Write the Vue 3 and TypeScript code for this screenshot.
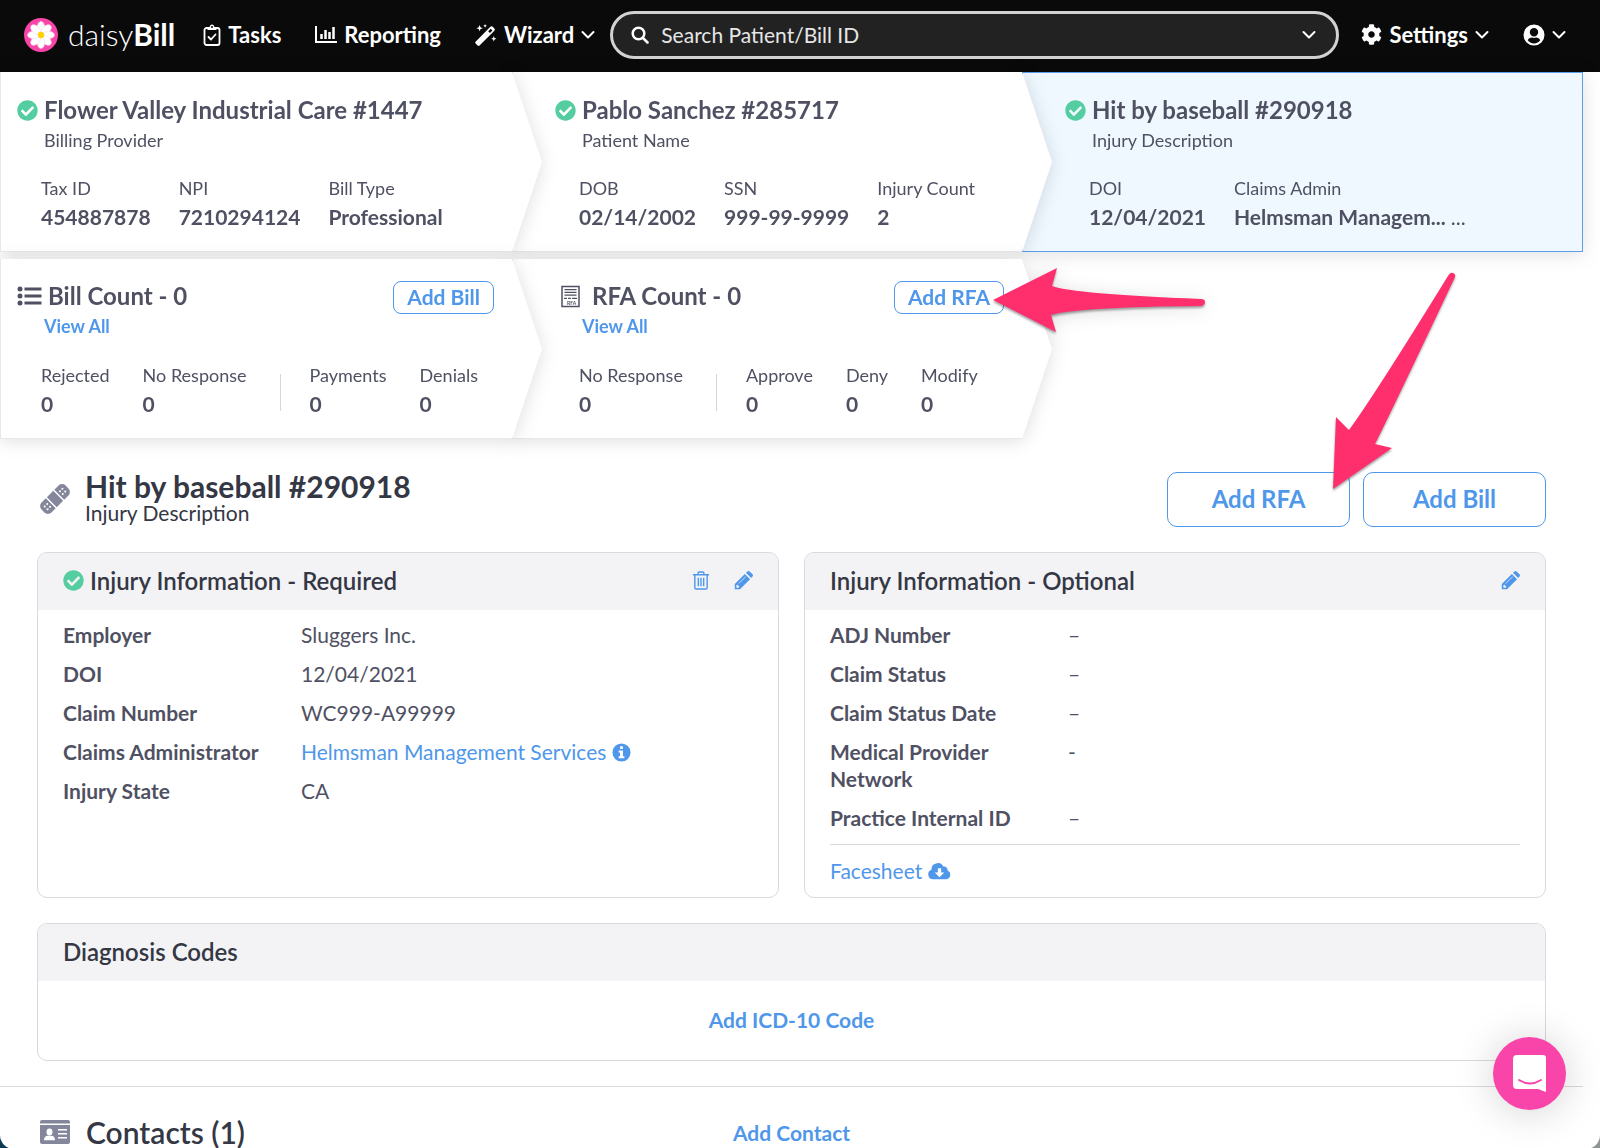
<script setup lang="ts">
import { ref } from 'vue'

interface Stat {
  label: string
  value: string
  more?: boolean
  divided?: boolean
}
interface Crumb {
  title: string
  caption: string
  active?: boolean
  stats: Stat[]
}
interface Counter {
  title: string
  icon: 'list' | 'rfa'
  action: string
  pointed?: boolean
  stats: Stat[]
}
interface Field {
  label: string
  value: string
  link?: boolean
}

const query = ref('')

const crumbs: Crumb[] = [
  {
    title: 'Flower Valley Industrial Care #1447',
    caption: 'Billing Provider',
    stats: [
      { label: 'Tax ID', value: '454887878' },
      { label: 'NPI', value: '7210294124' },
      { label: 'Bill Type', value: 'Professional' },
    ],
  },
  {
    title: 'Pablo Sanchez #285717',
    caption: 'Patient Name',
    stats: [
      { label: 'DOB', value: '02/14/2002' },
      { label: 'SSN', value: '999-99-9999' },
      { label: 'Injury Count', value: '2' },
    ],
  },
  {
    title: 'Hit by baseball #290918',
    caption: 'Injury Description',
    active: true,
    stats: [
      { label: 'DOI', value: '12/04/2021' },
      { label: 'Claims Admin', value: 'Helmsman Managem...', more: true },
    ],
  },
]

const counters: Counter[] = [
  {
    title: 'Bill Count - 0',
    icon: 'list',
    action: 'Add Bill',
    stats: [
      { label: 'Rejected', value: '0' },
      { label: 'No Response', value: '0' },
      { label: 'Payments', value: '0', divided: true },
      { label: 'Denials', value: '0' },
    ],
  },
  {
    title: 'RFA Count - 0',
    icon: 'rfa',
    action: 'Add RFA',
    pointed: true,
    stats: [
      { label: 'No Response', value: '0' },
      { label: 'Approve', value: '0', divided: true },
      { label: 'Deny', value: '0' },
      { label: 'Modify', value: '0' },
    ],
  },
]

const required: Field[] = [
  { label: 'Employer', value: 'Sluggers Inc.' },
  { label: 'DOI', value: '12/04/2021' },
  { label: 'Claim Number', value: 'WC999-A99999' },
  { label: 'Claims Administrator', value: 'Helmsman Management Services', link: true },
  { label: 'Injury State', value: 'CA' },
]

const optional: Field[] = [
  { label: 'ADJ Number', value: '–' },
  { label: 'Claim Status', value: '–' },
  { label: 'Claim Status Date', value: '–' },
  { label: 'Medical Provider Network', value: '-' },
  { label: 'Practice Internal ID', value: '–' },
]

const petals = [0, 45, 90, 135, 180, 225, 270, 315]
</script>

<template>
  <div class="window">
    <svg class="sprite" aria-hidden="true">
      <symbol id="check" viewBox="0 0 512 512">
        <path d="M504 256c0 136.967-111.033 248-248 248S8 392.967 8 256 119.033 8 256 8s248 111.033 248 248zM227.314 387.314l184-184c6.248-6.248 6.248-16.379 0-22.627l-22.627-22.627c-6.248-6.249-16.379-6.249-22.628 0L216 308.118l-70.059-70.059c-6.248-6.248-16.379-6.248-22.628 0l-22.627 22.627c-6.248 6.248-6.248 16.379 0 22.627l104 104c6.249 6.249 16.379 6.249 22.628.001z" />
      </symbol>
      <symbol id="cog" viewBox="0 0 512 512">
        <path d="M487.4 315.7l-42.6-24.6c4.3-23.2 4.3-47 0-70.2l42.6-24.6c4.9-2.8 7.1-8.6 5.5-14-11.1-35.6-30-67.8-54.7-94.6-3.8-4.1-10-5.1-14.8-2.3L380.8 110c-17.9-15.4-38.5-27.3-60.8-35.1V25.8c0-5.6-3.9-10.5-9.4-11.7-36.7-8.2-74.3-7.8-109.2 0-5.5 1.2-9.4 6.1-9.4 11.7V75c-22.2 7.9-42.8 19.8-60.8 35.1L88.700 85.500c-4.900-2.800-11-1.900-14.800 2.300-24.700 26.700-43.600 58.900-54.700 94.600-1.700 5.400.6 11.200 5.500 14L67.300 221c-4.300 23.200-4.300 47 0 70.200l-42.600 24.600c-4.900 2.800-7.100 8.600-5.500 14 11.100 35.600 30 67.800 54.700 94.600 3.800 4.100 10 5.100 14.800 2.300l42.600-24.600c17.900 15.400 38.500 27.300 60.800 35.100v49.200c0 5.600 3.900 10.500 9.400 11.700 36.700 8.200 74.300 7.800 109.200 0 5.500-1.200 9.400-6.100 9.400-11.700v-49.200c22.200-7.900 42.800-19.800 60.800-35.100l42.600 24.600c4.900 2.800 11 1.900 14.800-2.300 24.700-26.700 43.600-58.900 54.700-94.600 1.500-5.500-.7-11.300-5.600-14.100zM256 336c-44.100 0-80-35.900-80-80s35.900-80 80-80 80 35.900 80 80-35.900 80-80 80z" />
      </symbol>
      <symbol id="down" viewBox="0 0 14 14">
        <path d="M1.500 4l5.500 5.500L12.500 4" fill="none" stroke="currentColor" stroke-width="2" stroke-linecap="round" stroke-linejoin="round" />
      </symbol>
      <symbol id="tasks" viewBox="0 0 18 22">
        <g fill="none" stroke="currentColor" stroke-width="1.800" stroke-linejoin="round" stroke-linecap="round">
          <rect x="1.500" y="4" width="15" height="17" rx="2" />
          <path d="M5.500 13l2.500 2.500 4.500-5" />
        </g>
        <path d="M4.500 6V3.500h2C6.800 1.600 7.700.5 9 .5s2.200 1.100 2.500 3h2V6z" />
        <circle cx="9" cy="3" r="1" fill="#0a0a0a" />
      </symbol>
      <symbol id="chart" viewBox="0 0 22 18">
        <g fill="none" stroke="currentColor" stroke-width="2">
          <path d="M1 0v16h21" />
          <path d="M6.500 13V8M10.500 13V4M14.500 13V6M18.500 13V1" stroke-width="2.500" />
        </g>
      </symbol>
      <symbol id="wand" viewBox="0 0 24 24">
        <path d="M.9 19L16.500 3.200a2.200 2.200 0 0 1 3.100 0l1.300 1.300a2.200 2.200 0 0 1 0 3.100L5.200 23.200a1.800 1.800 0 0 1-2.600 0L.9 21.600a1.800 1.800 0 0 1 0-2.600z" />
        <path d="M14.400 7.800l1.900 1.900 2.700-2.700-1.900-1.900z" fill="#0a0a0a" />
        <path d="M5 1l1 2.500L8.500 4.500 6 5.500 5 8 4 5.500 1.500 4.500 4 3.500zM11 0l.6 1.400 1.400.6-1.400.6L11 4l-.6-1.400L9 2l1.400-.6zM20.500 13l.8 2.200 2.200.8-2.200.8-.8 2.200-.8-2.200-2.200-.8 2.200-.8z" />
      </symbol>
      <symbol id="search" viewBox="0 0 18 18">
        <g fill="none" stroke="currentColor" stroke-width="2.500" stroke-linecap="round">
          <circle cx="7.500" cy="7.500" r="5.800" />
          <path d="M12 12l4.500 4.500" />
        </g>
      </symbol>
      <symbol id="user" viewBox="0 0 22 22">
        <path fill-rule="evenodd" d="M11 .5a10.500 10.500 0 1 1 0 21 10.500 10.500 0 0 1 0-21zM11 4a4.200 4.200 0 1 0 0 8.400A4.200 4.200 0 0 0 11 4zM4.800 16.200C6 18.200 8.300 19.400 11 19.400s5-1.200 6.200-3.200c-.6-1.600-2.300-2.600-4.200-2.600-1.300.5-2.700.5-4 0-1.900 0-3.600 1-4.200 2.600z" />
      </symbol>
      <symbol id="list" viewBox="0 0 24 20">
        <circle cx="2.500" cy="3" r="2.500" /><circle cx="2.500" cy="10" r="2.500" /><circle cx="2.500" cy="17" r="2.500" />
        <path d="M7 1.500h17v3H7zM7 8.500h17v3H7zM7 15.500h17v3H7z" />
      </symbol>
      <symbol id="bandage" viewBox="0 0 32 32">
        <g transform="rotate(-45 16 16)">
          <path fill-rule="evenodd" d="M4 9h6v14H4a5 5 0 0 1-5-5v-4a5 5 0 0 1 5-5zM22 9h6a5 5 0 0 1 5 5v4a5 5 0 0 1-5 5h-6zM11.500 9h9v14h-9z" />
          <g fill="#fff">
            <circle cx="3.500" cy="14" r="1" /><circle cx="7" cy="14" r="1" /><circle cx="3.500" cy="18" r="1" /><circle cx="7" cy="18" r="1" />
            <circle cx="25" cy="14" r="1" /><circle cx="28.500" cy="14" r="1" /><circle cx="25" cy="18" r="1" /><circle cx="28.500" cy="18" r="1" />
          </g>
        </g>
      </symbol>
      <symbol id="trash" viewBox="0 0 18 20">
        <g fill="none" stroke="currentColor" stroke-width="1.500" stroke-linejoin="round">
          <path d="M.5 4h17M6 4V2.200Q6 1 7 1h4q1 0 1 1.200V4M2.500 4v13.500q0 1.500 1.500 1.500h10q1.500 0 1.500-1.500V4M6.200 7v9M9 7v9M11.800 7v9" />
        </g>
      </symbol>
      <symbol id="pencil" viewBox="0 0 20 20">
        <path fill-rule="evenodd" d="M.8 13.700L11.400 3.100l5.500 5.500L6.300 19.200H.8zM2.500 15.300v2.200h2.400l.8-.8-2.400-2.400zM12.600 1.900L14.200.5q1.200-1 2.300 0l3 3q1 1.100 0 2.300l-1.400 1.600z" />
        <path d="M5 13.200l7.300-7.300" stroke="#f3f3f6" stroke-width=".8" />
      </symbol>
      <symbol id="info" viewBox="0 0 20 20">
        <circle cx="10" cy="10" r="9.500" />
        <path d="M8.500 3.500h3v2.700h-3zM7 8h4.600v6H13v2H7v-2h1.400v-4H7z" fill="#fff" />
      </symbol>
      <symbol id="cloud" viewBox="0 0 24 18">
        <path fill-rule="evenodd" d="M5.200 17.500A5 5 0 0 1 3.600 7.800 6.600 6.600 0 0 1 16 4.300a3.700 3.700 0 0 1 4.400 4.200 4.700 4.700 0 0 1-1.300 9zM10.300 6v4.500H7l5 5 5-5h-3.300V6z" />
      </symbol>
      <symbol id="card" viewBox="0 0 30 24">
        <path fill-rule="evenodd" d="M2 0h26q2 0 2 2v1.500H0V2Q0 0 2 0zM0 5h30v17q0 2-2 2H2q-2 0-2-2zM9.500 8.500a3 3.400 0 1 0 0 6.800 3 3.400 0 0 0 0-6.800zM4 20.300h11c0-3-1.500-4.500-3.500-4.500h-4c-2 0-3.500 1.500-3.500 4.500zM18 9v1.600h9V9zM18 13v1.600h9V13zM18 17v1.600h9V17z" />
      </symbol>
    </svg>

    <header class="topbar">
      <a class="brand" href="#">
        <svg class="brand-mark" viewBox="0 0 34 34" aria-hidden="true">
          <circle cx="17" cy="17" r="17" fill="#f945a9" />
          <ellipse v-for="a in petals" :key="a" cx="17" cy="9.500" rx="3.700" ry="6" fill="#fff" stroke="#f7dcea" stroke-width=".6" :transform="`rotate(${a} 17 17)`" />
          <circle cx="17" cy="17" r="3.200" fill="#fbd20a" />
        </svg>
        <span class="brand-name">daisy<b>Bill</b></span>
      </a>
      <nav class="menu" aria-label="Main">
        <a href="#"><svg class="i-tasks"><use href="#tasks" /></svg>Tasks</a>
        <a href="#"><svg class="i-chart"><use href="#chart" /></svg>Reporting</a>
        <button type="button"><svg class="i-wand"><use href="#wand" /></svg>Wizard<svg class="i-down"><use href="#down" /></svg></button>
      </nav>
      <label class="search">
        <svg class="i-search"><use href="#search" /></svg>
        <input v-model="query" type="text" placeholder="Search Patient/Bill ID" aria-label="Search Patient/Bill ID" />
        <svg class="i-down"><use href="#down" /></svg>
      </label>
      <div class="menu account">
        <button type="button"><svg class="i-cog"><use href="#cog" /></svg>Settings<svg class="i-down"><use href="#down" /></svg></button>
        <button type="button" aria-label="Account"><svg class="i-user"><use href="#user" /></svg><svg class="i-down"><use href="#down" /></svg></button>
      </div>
    </header>

    <main class="page">
      <div class="trail">
        <section v-for="crumb in crumbs" :key="crumb.title" class="step" :class="{ active: crumb.active }">
          <h2><svg class="i-check"><use href="#check" /></svg>{{ crumb.title }}</h2>
          <p class="caption">{{ crumb.caption }}</p>
          <dl class="stats">
            <div v-for="s in crumb.stats" :key="s.label">
              <dt>{{ s.label }}</dt>
              <dd>{{ s.value }} <span v-if="s.more" class="more">...</span></dd>
            </div>
          </dl>
        </section>
      </div>
      <div class="trail counters">
        <section v-for="c in counters" :key="c.title" class="step">
          <div class="count-head">
            <h2>
              <svg v-if="c.icon === 'list'" class="i-list"><use href="#list" /></svg>
              <svg v-else class="i-rfa" viewBox="0 0 19 22" aria-hidden="true">
                <rect x="1" y="1" width="17" height="20" fill="none" stroke="currentColor" stroke-width="1.500" />
                <path d="M3.500 3.500h12v1.300h-12zM3.500 6.300h12v1.300h-12zM3.500 9h12v1.300h-12zM3 12.200h3v1.200H3zM7 12.200h3v1.200H7zM11 12.200h5v1.200h-5z" />
                <text x="6" y="19" font-size="5" font-weight="700">RFA</text>
              </svg>
              {{ c.title }}
            </h2>
            <span class="pointer-anchor">
              <button type="button" class="outline small">{{ c.action }}</button>
              <svg v-if="c.pointed" class="arrow arrow-left" viewBox="0 0 216 68" aria-hidden="true">
                <path d="M1 33L65 1 60 19Q82 27 209 32Q213 32 213 35T209 39Q86 40 59 48L64 65Z" />
              </svg>
            </span>
          </div>
          <p class="caption"><a href="#">View All</a></p>
          <dl class="stats">
            <div v-for="s in c.stats" :key="s.label" :class="{ divided: s.divided }">
              <dt>{{ s.label }}</dt>
              <dd>{{ s.value }}</dd>
            </div>
          </dl>
        </section>
      </div>

      <div class="content">
        <div class="headline">
          <svg class="i-bandage"><use href="#bandage" /></svg>
          <div class="headline-text">
            <h1>Hit by baseball #290918</h1>
            <p>Injury Description</p>
          </div>
          <span class="pointer-anchor">
            <button type="button" class="outline large">Add RFA</button>
            <svg class="arrow arrow-down" viewBox="0 0 126 220" aria-hidden="true">
              <path d="M1 217L4 145 17 158Q42 124 116 4Q118 0 121 1T123 5Q64 130 43 172L60 176Z" />
            </svg>
          </span>
          <button type="button" class="outline large">Add Bill</button>
        </div>

        <div class="panels">
          <section class="panel">
            <header>
              <h2><svg class="i-check"><use href="#check" /></svg>Injury Information - Required</h2>
              <button type="button" class="icon" aria-label="Delete"><svg class="i-trash"><use href="#trash" /></svg></button>
              <button type="button" class="icon" aria-label="Edit required"><svg class="i-pencil"><use href="#pencil" /></svg></button>
            </header>
            <dl class="fields">
              <template v-for="f in required" :key="f.label">
                <dt>{{ f.label }}</dt>
                <dd>
                  <a v-if="f.link" href="#">{{ f.value }}<svg class="i-info"><use href="#info" /></svg></a>
                  <template v-else>{{ f.value }}</template>
                </dd>
              </template>
            </dl>
          </section>
          <section class="panel">
            <header>
              <h2>Injury Information - Optional</h2>
              <button type="button" class="icon" aria-label="Edit optional"><svg class="i-pencil"><use href="#pencil" /></svg></button>
            </header>
            <dl class="fields">
              <template v-for="f in optional" :key="f.label">
                <dt>{{ f.label }}</dt>
                <dd>{{ f.value }}</dd>
              </template>
            </dl>
            <p class="sheet"><a href="#">Facesheet<svg class="i-cloud"><use href="#cloud" /></svg></a></p>
          </section>
        </div>

        <section class="panel">
          <header><h2>Diagnosis Codes</h2></header>
          <p class="add"><a href="#">Add ICD-10 Code</a></p>
        </section>
      </div>

      <section class="contacts">
        <h2><svg class="i-card"><use href="#card" /></svg>Contacts (1)</h2>
        <a href="#">Add Contact</a>
      </section>
    </main>

    <button type="button" class="chat" aria-label="Open chat">
      <svg viewBox="0 0 34 38" aria-hidden="true">
        <path d="M4 0h26q3 0 3 3v34l-8-3H4q-4 0-4-4V4q0-4 4-4z" fill="#fff" />
        <path d="M6 25q11 7 22 0" fill="none" stroke="#f945a9" stroke-width="2" stroke-linecap="round" />
      </svg>
    </button>
  </div>
</template>

<style>
body {
  margin: 0;
  background: linear-gradient(90deg, #0b3a57 50%, #8f9492 50%);
}
</style>

<style scoped>
.window {
  min-height: 100vh;
  box-sizing: border-box;
  background: #fff;
  border-radius: 0 0 14px 14px;
  overflow: hidden;
  color: #4f5163;
  font: 21px/27px Lato, "Open Sans", sans-serif;
}
.sprite { position: absolute; width: 0; height: 0; }
svg { fill: currentColor; flex: none; }
h1, h2, p, dl, dd { margin: 0; }
a { color: #4f97ea; text-decoration: none; }
button { font: inherit; color: inherit; background: none; border: 0; padding: 0; cursor: pointer; }

/* top bar */
.topbar {
  display: flex;
  align-items: center;
  height: 72px;
  padding: 0 34px 2px 24px;
  box-sizing: border-box;
  background: #0a0a0a;
  color: #fff;
}
.brand { display: flex; align-items: center; gap: 10px; color: #fff; margin-right: 28px; }
.brand-mark { width: 34px; height: 34px; }
.brand-name { padding-bottom: 2px; font-size: 30px; line-height: 34px; font-weight: 300; }
.brand-name b { font-weight: 700; }
.menu { display: flex; align-items: center; gap: 34px; font-weight: 700; font-size: 22px; }
.menu a, .menu button { display: flex; align-items: center; gap: 7px; padding-bottom: 1px; color: #fff; }
.i-tasks { width: 18px; height: 22px; }
.i-chart { width: 22px; height: 18px; }
.i-wand { width: 22px; height: 22px; }
.i-cog { width: 21px; height: 21px; }
.i-user { width: 22px; height: 22px; }
.i-down { width: 14px; height: 14px; }
.search {
  flex: 1;
  display: flex;
  align-items: center;
  gap: 12px;
  height: 48px;
  box-sizing: border-box;
  margin: 0 22px 0 15px;
  padding: 0 20px 0 18px;
  border: 3px solid #d4d1d1;
  border-radius: 24px;
  background: #222;
}
.search input { flex: 1; min-width: 0; border: 0; outline: 0; padding: 0 0 2px; background: none; color: #eee; font: inherit; }
.search input::placeholder { color: #e6e6e6; opacity: 1; }
.i-search { width: 18px; height: 18px; }

/* breadcrumb steps */
.page { margin-right: 17px; }
.trail { display: grid; grid-template-columns: 512fr 510fr 561fr; margin-bottom: 7px; }
.step {
  position: relative;
  height: 180px;
  box-sizing: border-box;
  padding: 24px 18px 0 43px;
  filter: drop-shadow(0 2px 9px rgba(0, 0, 0, .13));
}
.step:nth-child(1) { z-index: 3; padding-left: 17px; }
.step:nth-child(2) { z-index: 2; }
.step:nth-child(3) { z-index: 1; }
.step::before {
  content: "";
  position: absolute;
  z-index: -1;
  inset: 0 -30px 0 0;
  background: #fff;
  border: solid #e8e8ec;
  border-width: 0 0 1px 1px;
  clip-path: polygon(0 0, calc(100% - 30px) 0, 100% 50%, calc(100% - 30px) 100%, 0 100%);
}
.step.active::before {
  inset: 0;
  background: #f0f8ff;
  border: 1px solid #5a9eec;
  clip-path: none;
}
.step h2 { display: flex; align-items: center; gap: 6px; font-size: 24px; line-height: 28px; font-weight: 700; white-space: nowrap; }
.i-check { width: 21px; height: 21px; color: #54cda0; }
.caption { margin: 4px 0 0 27px; font-size: 18px; line-height: 24px; }
.caption a { font-weight: 700; }
.stats { display: flex; gap: 28px; margin: 22px 0 0 24px; white-space: nowrap; }
.stats dt { font-size: 18px; line-height: 28px; }
.stats dd { font-weight: 700; line-height: 29px; }
.more { font-weight: 400; }
.counters { margin-bottom: 0; }
.counters .step { padding-top: 22px; }
.counters h2 { padding-bottom: 2px; }
.counters .caption { margin-top: 1px; }
.counters .stats { gap: 33px; margin-top: 23px; }
.count-head { display: flex; justify-content: space-between; align-items: center; height: 32px; }
.divided { position: relative; padding-left: 30px; }
.divided::before { content: ""; position: absolute; left: 0; top: 13px; height: 37px; border-left: 1px solid #d5d5de; }
.i-list { width: 25px; height: 20px; }
.i-rfa { width: 19px; height: 23px; margin: 0 6px; }

.outline { display: block; border: 1px solid #4f97ea; color: #4f97ea; background: #fff; font-weight: 700; }
.small { height: 33px; padding: 0 13px 2px; border-radius: 8px; }
.large { width: 183px; height: 55px; padding-bottom: 2px; border-radius: 10px; font-size: 24px; }
.pointer-anchor { position: relative; }
.arrow { position: absolute; fill: #ff2e6c; filter: drop-shadow(0 2px 1px rgba(0, 0, 0, .35)); pointer-events: none; }
.arrow-left { left: calc(100% - 12px); top: -14px; width: 216px; height: 68px; }
.arrow-down { left: 165px; bottom: 35px; width: 126px; height: 220px; }

/* injury content */
.content { padding: 32px 37px 25px; }
.headline { display: flex; align-items: center; gap: 13px; margin-bottom: 25px; }
.headline-text { flex: 1; padding: 0 0 2px 1px; }
.headline h1 { font-size: 30px; line-height: 30px; font-weight: 700; color: #343744; }
.headline p { line-height: 24px; color: #343744; }
.i-bandage { width: 32px; height: 32px; margin-left: 2px; color: #84879b; }
.panels { display: grid; grid-template-columns: 1fr 1fr; gap: 25px; margin-bottom: 25px; }
.panel { border: 1px solid #d8d8df; border-radius: 10px; overflow: hidden; background: #fff; }
.panel header { display: flex; align-items: center; gap: 24px; height: 57px; padding: 0 25px 2px; box-sizing: border-box; background: #f3f3f6; color: #343744; }
.panel h2 { flex: 1; display: flex; align-items: center; gap: 6px; font-size: 24px; line-height: 28px; font-weight: 600; }
.icon { display: flex; color: #4f97ea; }
.i-trash { width: 18px; height: 19px; }
.i-pencil { width: 19px; height: 19px; }
.fields { display: grid; grid-template-columns: 208px 1fr; gap: 12px 30px; padding: 11px 25px 13px; }
.fields dt { font-weight: 700; }
.i-info { width: 19px; height: 19px; margin-left: 6px; vertical-align: -2px; }
.i-cloud { width: 23px; height: 18px; margin-left: 6px; vertical-align: -1px; }
.sheet { margin: 0 25px; padding: 12px 0 13px; border-top: 1px solid #d8d8df; }
.add { padding: 25px 0 27px; text-align: center; font-weight: 700; }
.contacts {
  display: grid;
  grid-template-columns: 1fr auto 1fr;
  align-items: center;
  padding: 29px 37px 1px;
  border-top: 1px solid #d8d8df;
  font-weight: 700;
}
.contacts h2 { display: flex; align-items: center; gap: 16px; font-size: 30px; line-height: 32px; font-weight: 600; color: #343744; }
.i-card { width: 30px; height: 24px; margin-left: 3px; color: #84879b; }

.chat {
  position: fixed;
  right: 34px;
  bottom: 38px;
  width: 73px;
  height: 73px;
  border-radius: 50%;
  background: #f945a9;
  display: flex;
  align-items: center;
  justify-content: center;
  box-shadow: 0 2px 40px rgba(0, 0, 0, .18);
}
.chat svg { width: 34px; height: 38px; }
</style>
